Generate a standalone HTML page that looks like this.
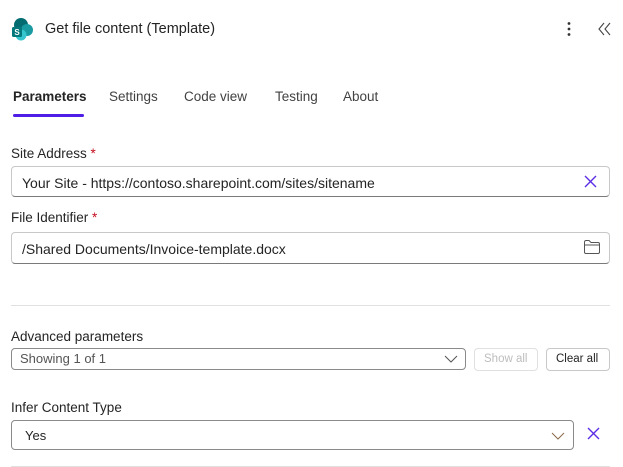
<!DOCTYPE html><html><head><style>
body{margin:0;width:623px;height:467px;background:#fff;font-family:"Liberation Sans",sans-serif;color:#242424;position:relative;overflow:hidden;font-size:14px}
.a{position:absolute}
.box{position:absolute;border:1px solid #c8c8c8;border-radius:4px;box-sizing:border-box;border-bottom-color:#7a7a7a}
.lbl{font-size:13.5px}
.req{color:#c50f1f}
</style></head><body>
<svg class="a" style="left:11px;top:17px" width="24" height="24" viewBox="0 0 24 24"><circle cx="10" cy="8" r="7" fill="#036c70"/><circle cx="16" cy="13" r="6" fill="#1a9ba1"/><circle cx="10" cy="18" r="5.5" fill="#37c6d0"/><rect x="1" y="10" width="10" height="10" rx="1.5" fill="#03787c"/><text x="6" y="18" font-size="8" fill="#fff" text-anchor="middle" font-family="Liberation Sans" font-weight="bold">S</text></svg>
<div class="a" style="left:45px;top:21px;font-size:14.5px">Get file content (Template)</div>
<svg class="a" style="left:566px;top:21px" width="6" height="16"><circle cx="3" cy="2.5" r="1.4" fill="#333"/><circle cx="3" cy="8" r="1.4" fill="#333"/><circle cx="3" cy="13.5" r="1.4" fill="#333"/></svg>
<svg class="a" style="left:598px;top:22px" width="13" height="14"><path d="M6 1L1 7L6 13M12 1L7 7L12 13" fill="none" stroke="#444" stroke-width="1.1"/></svg>
<div class="a" style="left:13px;top:89px;font-weight:bold;font-size:13.5px">Parameters</div>
<div class="a" style="left:13px;top:114px;width:71px;height:3px;background:#4f1ee6;border-radius:2px"></div>
<div class="a" style="left:109px;top:89px;color:#424242;font-size:13.5px">Settings</div>
<div class="a" style="left:184px;top:89px;color:#424242;font-size:13.5px">Code view</div>
<div class="a" style="left:275px;top:89px;color:#424242;font-size:13.5px">Testing</div>
<div class="a" style="left:343px;top:89px;color:#424242;font-size:13.5px">About</div>
<div class="a lbl" style="left:11px;top:146px">Site Address <span class="req">*</span></div>
<div class="box" style="left:11px;top:166px;width:599px;height:31px"></div>
<div class="a" style="left:22px;top:175px">Your Site - https://contoso.sharepoint.com/sites/sitename</div>
<svg class="a" style="left:583px;top:174px" width="15" height="15"><path d="M2 2L13 13M13 2L2 13" stroke="#5b2ee6" stroke-width="1.4"/></svg>
<div class="a lbl" style="left:11px;top:210px">File Identifier <span class="req">*</span></div>
<div class="box" style="left:11px;top:232px;width:599px;height:32px"></div>
<div class="a" style="left:22px;top:241px">/Shared Documents/Invoice-template.docx</div>
<svg class="a" style="left:583px;top:239px" width="18" height="16"><path d="M1.5 3.5Q1.5 1.5 3 1.5H6L8 3.5H15Q16.5 3.5 16.5 5V13Q16.5 14.5 15 14.5H3Q1.5 14.5 1.5 13Z M1.5 6H16.5" fill="none" stroke="#555" stroke-width="1"/></svg>
<div class="a" style="left:11px;top:305px;width:599px;height:1px;background:#e0e0e0"></div>
<div class="a lbl" style="left:11px;top:329px">Advanced parameters</div>
<div class="box" style="left:11px;top:348px;width:455px;height:22px;border-color:#8a8a8a"></div>
<div class="a" style="left:20px;top:351px;font-size:13px;color:#555">Showing 1 of 1</div>
<svg class="a" style="left:444px;top:354px" width="14" height="10"><path d="M1 2L7 8L13 2" fill="none" stroke="#555"/></svg>
<div class="box" style="left:474px;top:348px;width:64px;height:23px;border-color:#e0e0e0"></div>
<div class="a" style="left:484px;top:353px;font-size:11.5px;color:#bdbdbd">Show all</div>
<div class="box" style="left:546px;top:348px;width:64px;height:23px;border-color:#c8c8c8"></div>
<div class="a" style="left:556px;top:353px;font-size:11.5px">Clear all</div>
<div class="a lbl" style="left:11px;top:400px">Infer Content Type</div>
<div class="box" style="left:11px;top:420px;width:563px;height:30px;border-color:#8a8a8a"></div>
<div class="a" style="left:25px;top:428px;font-size:13px">Yes</div>
<svg class="a" style="left:551px;top:431px" width="14" height="10"><path d="M1 2L7 8L13 2" fill="none" stroke="#8a6a4a"/></svg>
<svg class="a" style="left:586px;top:426px" width="15" height="15"><path d="M2 2L13 13M13 2L2 13" stroke="#5b2ee6" stroke-width="1.4"/></svg>
<div class="a" style="left:11px;top:466px;width:599px;height:1px;background:#e0e0e0"></div>
</body></html>
